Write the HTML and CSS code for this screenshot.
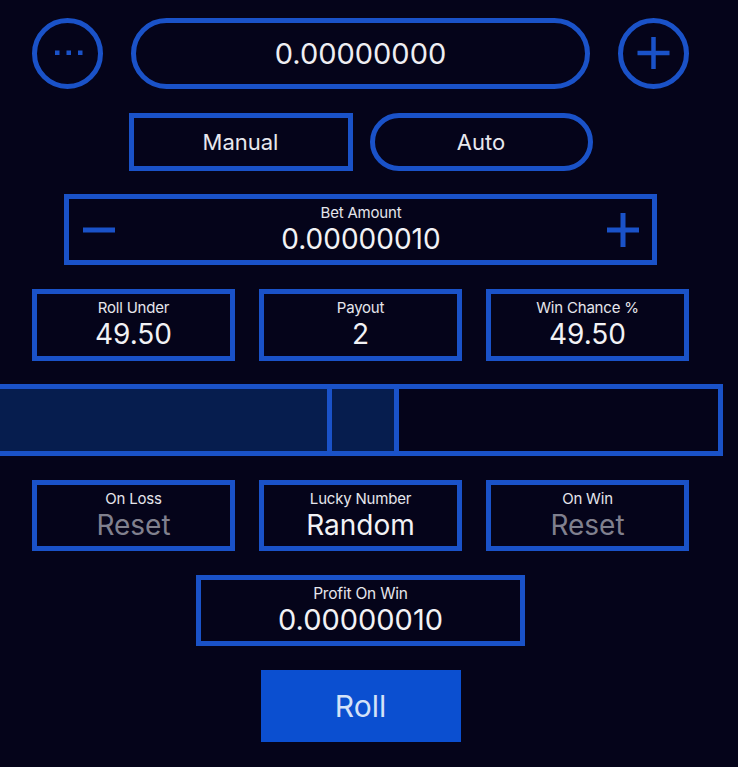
FILE: index.html
```html
<!DOCTYPE html>
<html lang="en">
<head>
<meta charset="utf-8">
<title>Dice</title>
<link rel="stylesheet" href="styles.css">
</head>
<body>
<div class="app">
  <div class="top-row">
    <button class="circle" aria-label="More">
      <svg width="61" height="61" viewBox="0 0 61 61"><rect x="18" y="27.5" width="4.5" height="4.5" fill="#1a52c8"/><rect x="29.5" y="27.5" width="4.5" height="4.5" fill="#1a52c8"/><rect x="41" y="27.5" width="4.5" height="4.5" fill="#1a52c8"/></svg>
    </button>
    <div class="balance">0.00000000</div>
    <button class="circle" aria-label="Add">
      <svg width="61" height="61" viewBox="0 0 61 61"><path d="M14.5 30h32M30.5 14v32" stroke="#1a52c8" stroke-width="4.5" fill="none"/></svg>
    </button>
  </div>

  <div class="mode-row">
    <button class="mode manual">Manual</button>
    <button class="mode auto">Auto</button>
  </div>

  <div class="bet">
    <span class="bet-btn">
      <svg width="34" height="34" viewBox="0 0 34 34"><path d="M1 17h32" stroke="#1a52c8" stroke-width="5" fill="none"/></svg>
    </span>
    <div class="field-text">
      <span class="label">Bet Amount</span>
      <span class="value">0.00000010</span>
    </div>
    <span class="bet-btn">
      <svg width="34" height="34" viewBox="0 0 34 34"><path d="M1 17h32M17 0v34" stroke="#1a52c8" stroke-width="5" fill="none"/></svg>
    </span>
  </div>

  <div class="stats">
    <div class="box"><span class="label">Roll Under</span><span class="value">49.50</span></div>
    <div class="box"><span class="label">Payout</span><span class="value">2</span></div>
    <div class="box"><span class="label">Win Chance %</span><span class="value">49.50</span></div>
  </div>

  <div class="slider">
    <div class="seg-under"></div>
    <div class="seg-mid"></div>
    <div class="seg-rest"></div>
  </div>

  <div class="stats lower">
    <div class="box"><span class="label">On Loss</span><span class="value muted">Reset</span></div>
    <div class="box"><span class="label">Lucky Number</span><span class="value">Random</span></div>
    <div class="box"><span class="label">On Win</span><span class="value muted">Reset</span></div>
  </div>

  <div class="box profit"><span class="label">Profit On Win</span><span class="value">0.00000010</span></div>

  <button class="roll">Roll</button>
</div>
</body>
</html>
```

FILE: styles.css
```css
* { box-sizing: border-box; }

html, body {
  margin: 0;
  padding: 0;
  background: #05041a;
}

body {
  font-family: "Inter", "Roboto", "Liberation Sans", sans-serif;
  color: #f0f0f4;
}

button {
  font-family: inherit;
  color: inherit;
  background: none;
  padding: 0;
  margin: 0;
  cursor: pointer;
}

.app {
  width: 721px;
  padding-top: 18px;
  display: flex;
  flex-direction: column;
  align-items: center;
  gap: 24px;
}

.top-row {
  display: flex;
  align-items: center;
  gap: 28px;
}

.circle {
  width: 71px;
  height: 71px;
  border: 5px solid #1a52c8;
  border-radius: 50%;
  display: flex;
  align-items: center;
  justify-content: center;
}

.circle svg { display: block; }

.balance {
  width: 459px;
  height: 71px;
  border: 5px solid #1a52c8;
  border-radius: 36px;
  display: flex;
  align-items: center;
  justify-content: center;
  font-size: 29px;
  color: #eeeef2;
}

.mode-row {
  display: flex;
  gap: 17px;
}

.mode {
  height: 58px;
  border: 5px solid #1a52c8;
  font-size: 22px;
  color: #e8e8ee;
}

.manual { width: 224px; }
.auto { width: 223px; border-radius: 29px; }

.bet {
  width: 593px;
  height: 71px;
  margin-top: -1px;
  border: 5px solid #1a52c8;
  display: flex;
  align-items: center;
  justify-content: space-between;
  padding: 0 12px 0 13px;
}

.bet-btn { display: flex; }
.bet-btn svg { display: block; }

.field-text,
.box {
  display: flex;
  flex-direction: column;
  align-items: center;
  justify-content: center;
}

.label {
  font-size: 15px;
  line-height: 18px;
  color: #e6e6ec;
  letter-spacing: -0.2px;
}

.value {
  font-size: 28px;
  line-height: 34px;
  color: #f2f2f5;
}

.value.muted { color: #80808e; }

.stats {
  display: flex;
  gap: 24px;
}

.box {
  width: 203px;
  height: 72px;
  border: 5px solid #1a52c8;
}

.stats.lower .box { height: 71px; }

.slider {
  align-self: flex-start;
  width: 723px;
  height: 72px;
  margin-top: -1px;
  border: 5px solid #1a52c8;
  border-left: none;
  display: flex;
}

.seg-under {
  width: 327px;
  background: #061d4e;
}

.seg-mid {
  width: 72px;
  background: #061d4e;
  border-left: 5px solid #1a52c8;
  border-right: 5px solid #1a52c8;
}

.seg-rest { flex: 1; }

.profit {
  width: 329px;
  height: 71px;
}

.profit .label { font-size: 15.5px; }
.profit .value { font-size: 29px; }

.roll {
  width: 200px;
  height: 72px;
  border: none;
  background: #0b4fd0;
  font-size: 30px;
  color: #d4e2f8;
}
```
